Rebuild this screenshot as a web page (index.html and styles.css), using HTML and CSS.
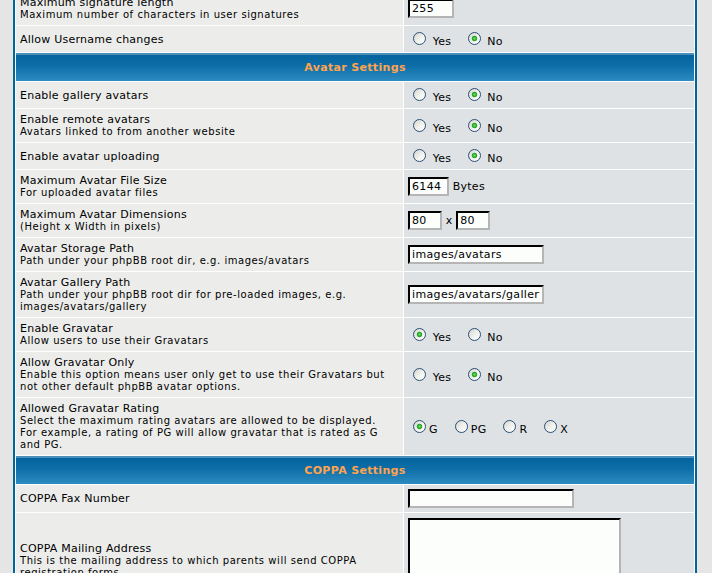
FILE: index.html
```html
<!DOCTYPE html>
<html>
<head>
<meta charset="utf-8">
<title>Configuration</title>
<link rel="stylesheet" href="styles.css">
</head>
<body>
<div class="page">
<table class="forumline">
  <tr>
    <td class="row1"><span class="gen">Maximum signature length</span><span class="gensmall">Maximum number of characters in user signatures</span></td>
    <td class="row2"><input class="post w46" type="text" value="255"></td>
  </tr>
  <tr>
    <td class="row1"><span class="gen">Allow Username changes</span></td>
    <td class="row2"><input class="radio" type="radio" name="un"> Yes&nbsp; &nbsp;<input class="radio" type="radio" name="un" checked> No</td>
  </tr>
  <tr>
    <th colspan="2">Avatar Settings</th>
  </tr>
  <tr>
    <td class="row1"><span class="gen">Enable gallery avatars</span></td>
    <td class="row2"><input class="radio" type="radio" name="ga"> Yes&nbsp; &nbsp;<input class="radio" type="radio" name="ga" checked> No</td>
  </tr>
  <tr>
    <td class="row1"><span class="gen">Enable remote avatars</span><span class="gensmall">Avatars linked to from another website</span></td>
    <td class="row2"><input class="radio" type="radio" name="ra"> Yes&nbsp; &nbsp;<input class="radio" type="radio" name="ra" checked> No</td>
  </tr>
  <tr>
    <td class="row1"><span class="gen">Enable avatar uploading</span></td>
    <td class="row2"><input class="radio" type="radio" name="au"> Yes&nbsp; &nbsp;<input class="radio" type="radio" name="au" checked> No</td>
  </tr>
  <tr>
    <td class="row1"><span class="gen">Maximum Avatar File Size</span><span class="gensmall">For uploaded avatar files</span></td>
    <td class="row2"><input class="post w41" type="text" value="6144"> Bytes</td>
  </tr>
  <tr>
    <td class="row1"><span class="gen">Maximum Avatar Dimensions</span><span class="gensmall">(Height x Width in pixels)</span></td>
    <td class="row2"><input class="post w34" type="text" value="80"> x <input class="post w34" type="text" value="80"></td>
  </tr>
  <tr>
    <td class="row1"><span class="gen">Avatar Storage Path</span><span class="gensmall">Path under your phpBB root dir, e.g. images/avatars</span></td>
    <td class="row2"><input class="post w136" type="text" value="images/avatars"></td>
  </tr>
  <tr>
    <td class="row1"><span class="gen">Avatar Gallery Path</span><span class="gensmall">Path under your phpBB root dir for pre-loaded images, e.g.<br>images/avatars/gallery</span></td>
    <td class="row2"><input class="post w136" type="text" value="images/avatars/gallery"></td>
  </tr>
  <tr>
    <td class="row1"><span class="gen">Enable Gravatar</span><span class="gensmall">Allow users to use their Gravatars</span></td>
    <td class="row2"><input class="radio" type="radio" name="eg" checked> Yes&nbsp; &nbsp;<input class="radio" type="radio" name="eg"> No</td>
  </tr>
  <tr>
    <td class="row1"><span class="gen">Allow Gravatar Only</span><span class="gensmall">Enable this option means user only get to use their Gravatars but<br>not other default phpBB avatar options.</span></td>
    <td class="row2"><input class="radio" type="radio" name="go"> Yes&nbsp; &nbsp;<input class="radio" type="radio" name="go" checked> No</td>
  </tr>
  <tr>
    <td class="row1 tall"><span class="gen">Allowed Gravatar Rating</span><span class="gensmall">Select the maximum rating avatars are allowed to be displayed.<br>For example, a rating of PG will allow gravatar that is rated as G<br>and PG.</span></td>
    <td class="row2"><input class="radio" type="radio" name="gr" checked><span class="opt">G</span><input class="radio" type="radio" name="gr"><span class="opt">PG</span><input class="radio" type="radio" name="gr"><span class="opt">R</span><input class="radio" type="radio" name="gr"><span class="opt">X</span></td>
  </tr>
  <tr>
    <th colspan="2">COPPA Settings</th>
  </tr>
  <tr>
    <td class="row1"><span class="gen">COPPA Fax Number</span></td>
    <td class="row2"><input class="post w166" type="text" value=""></td>
  </tr>
  <tr>
    <td class="row1"><span class="gen">COPPA Mailing Address</span><span class="gensmall">This is the mailing address to which parents will send COPPA<br>registration forms</span></td>
    <td class="row2 top"><textarea class="post area"></textarea></td>
  </tr>
</table>
</div>
</body>
</html>
```

FILE: styles.css
```css
html, body {
  margin: 0;
  padding: 0;
}

body {
  background: #E5E5E5;
  font-family: "DejaVu Sans", Verdana, sans-serif;
  color: #000000;
}

.page {
  padding-left: 13px;
  height: 573px;
  overflow: hidden;
}

.forumline {
  margin-top: -11px;
  width: 684px;
  border: 2px solid #006699;
  border-collapse: separate;
  border-spacing: 1px;
  background: #FFFFFF;
}

.forumline td {
  box-sizing: border-box;
  height: 26px;
  padding: 4px;
  vertical-align: middle;
  font-size: 11px;
  letter-spacing: 0.25px;
}

.row1 {
  width: 387px;
  background: #ECEDEB;
}

.row2 {
  background: #DEE2E5;
}

.forumline td.top {
  vertical-align: top;
}

.gen {
  display: block;
  font-size: 11px;
  line-height: 13px;
  letter-spacing: 0.23px;
}

.gensmall {
  display: block;
  font-size: 10px;
  line-height: 12px;
  letter-spacing: 0.55px;
}

.forumline td.tall {
  padding-top: 4px;
  padding-bottom: 4px;
}

.forumline th {
  box-sizing: border-box;
  height: 28px;
  padding: 0 4px;
  text-align: center;
  vertical-align: middle;
  font-size: 11px;
  font-weight: bold;
  letter-spacing: 0.33px;
  color: #FFA34F;
  background: linear-gradient(to bottom, #4a8fba 0, #4a8fba 2px, #05639d 2px, #0d6ea7 45%, #2c8bc0 100%);
}

.post {
  box-sizing: border-box;
  height: 19px;
  margin: 0;
  padding: 1px 2px;
  border-style: solid;
  border-width: 2px;
  border-color: #000000 #B5B5B5 #B5B5B5 #000000;
  background: #FCFEFC;
  font-family: "DejaVu Sans", Verdana, sans-serif;
  font-size: 11px;
  letter-spacing: 0.35px;
  color: #000000;
  outline: none;
}

.w46 { width: 46px; }
.w41 { width: 41px; }
.w34 { width: 34px; }
.w136 { width: 136px; }
.w166 { width: 166px; }

.area {
  display: block;
  width: 213px;
  height: 86px;
  margin-top: 1px;
  resize: none;
}

.radio {
  -webkit-appearance: none;
  appearance: none;
  box-sizing: border-box;
  width: 13px;
  height: 13px;
  margin: 2px 3px 0 5px;
  border: 1px solid #2b4f78;
  border-radius: 50%;
  background: linear-gradient(135deg, #d6d6d0 0%, #f2f2ee 55%, #ffffff 100%);
  vertical-align: baseline;
}

.radio:checked {
  background:
    radial-gradient(circle at 50% 50%, #6ee06e 0, #22a322 2.2px, rgba(34,163,34,0) 3.2px),
    linear-gradient(135deg, #d6d6d0 0%, #f2f2ee 55%, #ffffff 100%);
}

.opt {
  margin-right: 12px;
}
```
